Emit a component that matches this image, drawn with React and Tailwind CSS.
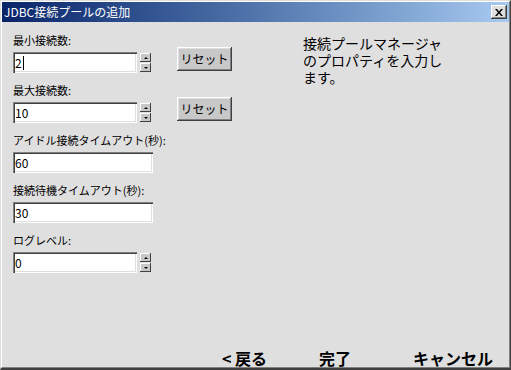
import React from "react";

const jp = { fontFamily: '"Noto Sans CJK JP", "Noto Sans", sans-serif' };

function Spinner() {
  return (
    <div className="flex flex-col gap-[1px] pt-[1px] ml-[3px]">
      <div className="w-[11px] h-[9px] bg-[#c8c8c8] shadow-[inset_-1px_-1px_0_#404040,inset_1px_1px_0_#ffffff] flex items-center justify-center">
        <div className="w-0 h-0 border-l-[2px] border-r-[2px] border-b-[2px] border-l-transparent border-r-transparent border-b-black" />
      </div>
      <div className="w-[11px] h-[9px] bg-[#c8c8c8] shadow-[inset_-1px_-1px_0_#404040,inset_1px_1px_0_#ffffff] flex items-center justify-center">
        <div className="w-0 h-0 border-l-[2px] border-r-[2px] border-t-[2px] border-l-transparent border-r-transparent border-t-black" />
      </div>
    </div>
  );
}

function Field({ value, width, caret }) {
  return (
    <div
      className="h-[21px] bg-white shadow-[inset_1px_1px_0_#808080,inset_2px_2px_0_#404040,inset_-1px_-1px_0_#ffffff,inset_-2px_-2px_0_#dfdfdf] flex items-center pl-[2px] text-[12px] text-black"
      style={{ width }}
    >
      <span className="leading-[14px]">{value}</span>
      {caret && <span className="w-[1px] h-[14px] bg-black ml-[1px]" />}
    </div>
  );
}

function ResetButton() {
  return (
    <button className="mt-[14px] ml-[26px] w-[55px] h-[24px] bg-[#c8c8c8] shadow-[inset_-1px_-1px_0_#404040,inset_1px_1px_0_#ffffff,inset_-2px_-2px_0_#808080,inset_2px_2px_0_#dfdfdf] text-[12px] text-black flex items-center justify-center">
      リセット
    </button>
  );
}

function Row({ label, value, spinner, reset, caret, last }) {
  return (
    <div className={`flex items-start ${last ? "" : "mb-[10px]"}`}>
      <div className="flex flex-col">
        <div className="h-[14px] leading-[14px] text-[11px] text-black whitespace-nowrap">{label}</div>
        <div className="flex mt-[5px]">
          <Field value={value} width={spinner ? 124 : 140} caret={caret} />
          {spinner && <Spinner />}
        </div>
      </div>
      {reset && <ResetButton />}
    </div>
  );
}

export default function App() {
  return (
    <div
      className="w-[511px] h-[370px] border-t border-l border-[#dfdfdf] border-r border-r-[#404040] border-b-2 border-b-[#404040]"
      style={jp}
    >
      <div className="w-full h-full border-t border-l border-white border-r border-r-[#808080] border-b border-b-[#808080] bg-[#dfdfdf] flex flex-col">
        <div className="h-[20px] bg-gradient-to-r from-[#0a246a] to-[#a6caf0] flex items-center justify-between pl-[2px] pr-[2px]">
          <span className="text-white text-[12px] leading-[14px]">JDBC接続プールの追加</span>
          <button className="w-[16px] h-[14px] bg-[#dfdfdf] shadow-[inset_-1px_-1px_0_#404040,inset_1px_1px_0_#ffffff,inset_-2px_-2px_0_#808080] flex items-center justify-center">
            <svg width="8" height="7" viewBox="0 0 8 7">
              <path d="M0 0h2l2 2.5L6 0h2L5 3.5 8 7H6L4 4.5 2 7H0l3-3.5z" fill="#000" />
            </svg>
          </button>
        </div>
        <div className="flex-1 flex">
          <div className="pl-[11px] pt-[11px] w-[300px] flex flex-col">
            <Row label="最小接続数:" value="2" spinner reset caret />
            <Row label="最大接続数:" value="10" spinner reset />
            <Row label="アイドル接続タイムアウト(秒):" value="60" />
            <Row label="接続待機タイムアウト(秒):" value="30" />
            <Row label="ログレベル:" value="0" spinner last />
          </div>
          <div className="pt-[13px] pl-[1px] text-[14px] leading-[17px] text-black">
            接続プールマネージャ
            <br />
            のプロパティを入力し
            <br />
            ます。
          </div>
        </div>
        <div className="h-[17px] flex items-center text-[16px] leading-[17px] font-bold text-black">
          <span className="ml-[220px]">&lt; 戻る</span>
          <span className="ml-[52px]">完了</span>
          <span className="ml-[62px]">キャンセル</span>
        </div>
      </div>
    </div>
  );
}
